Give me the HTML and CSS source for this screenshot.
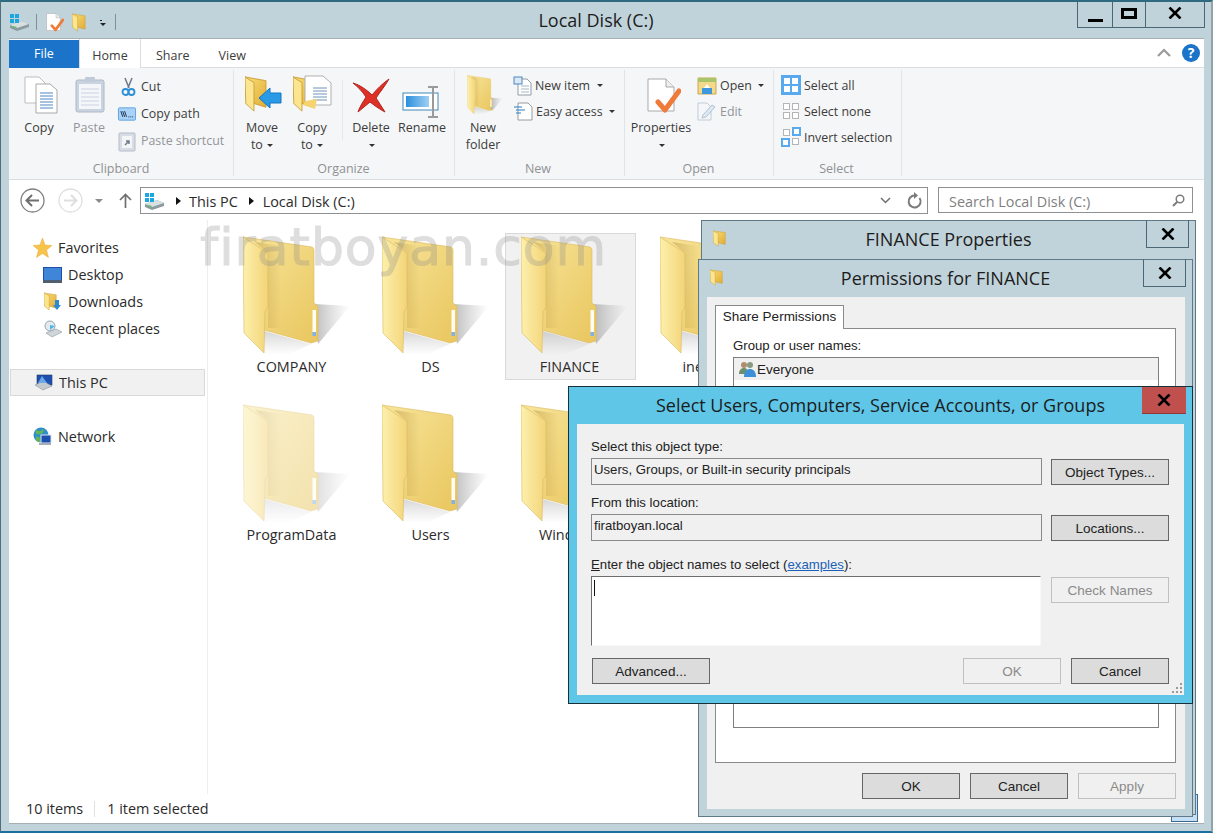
FILE: index.html
```html
<!DOCTYPE html>
<html lang="en">
<head>
<meta charset="utf-8">
<title>Local Disk (C:)</title>
<link rel="stylesheet" href="styles.css">
</head>
<body>
<svg class="defs" width="0" height="0" aria-hidden="true">
  <defs>
    <linearGradient id="gBack" x1="0" y1="0" x2="1" y2="1"><stop offset="0" stop-color="#f8e59b"/><stop offset="1" stop-color="#e9c65e"/></linearGradient>
    <linearGradient id="gFlap" x1="0" y1="0" x2="1" y2="0"><stop offset="0" stop-color="#fdf0ac"/><stop offset="1" stop-color="#f3d478"/></linearGradient>
    <linearGradient id="gFold" x1="0" y1="0" x2="1" y2="0"><stop offset="0" stop-color="#a9842c" stop-opacity=".4"/><stop offset="1" stop-color="#a9842c" stop-opacity="0"/></linearGradient>
    <linearGradient id="gSm" x1="0" y1="0" x2="1" y2="1"><stop offset="0" stop-color="#f9de7c"/><stop offset="1" stop-color="#e2ac32"/></linearGradient>
    <linearGradient id="gShadow" x1="0" y1="0" x2="1" y2="0"><stop offset="0" stop-color="#8f8f8f" stop-opacity=".6"/><stop offset="1" stop-color="#aaa" stop-opacity="0"/></linearGradient>
    <linearGradient id="gFloor" x1="0" y1="0" x2="0" y2="1"><stop offset="0" stop-color="#999" stop-opacity=".4"/><stop offset="1" stop-color="#aaa" stop-opacity="0"/></linearGradient>
    <linearGradient id="gBlue" x1="0" y1="0" x2="1" y2="0"><stop offset="0" stop-color="#2c8fdc"/><stop offset="1" stop-color="#9fd0f4"/></linearGradient>
    <symbol id="folder" viewBox="0 0 107 120">
      <path d="M71 68 107 70 75 108Z" fill="url(#gShadow)"/>
      <path d="M21 95 68 108 44 119H21Z" fill="url(#gFloor)"/>
      <path d="M0 1 69 11Q71 12 71 14V67L75 70V105L68 107 21 94Z" fill="url(#gBack)" stroke="#dcb85e" stroke-width=".6"/>
      <path d="M12 6 38 10V92H25V17Z" fill="url(#gFold)"/>
      <rect x="69.500" y="74" width="3.500" height="22" fill="#fffdf2"/>
      <rect x="69.500" y="96" width="3.500" height="4" fill="#7fb2e8"/>
      <path d="M0 1 25 17V71L22 76 21 117 1 97Z" fill="url(#gFlap)" stroke="#dcb85e" stroke-width=".6"/>
    </symbol>
    <symbol id="folder-s" viewBox="0 0 16 20" preserveAspectRatio="none">
      <path d="M0 1 14 3V17L6 15Z" fill="url(#gSm)" stroke="#c99a34" stroke-width=".5"/>
      <path d="M0 1 6 4V19L0.500 15Z" fill="#fbe58e" stroke="#c99a34" stroke-width=".5"/>
    </symbol>
    <symbol id="drive" viewBox="0 0 20 18">
      <path d="M1 12 13 8 20 11V14L8 18 1 15Z" fill="#8d9ba0"/>
      <path d="M1 12 13 8 20 11 8 15Z" fill="#d9e0e2"/>
      <path d="M4 13 8 14 7 15 3 14Z" fill="#57c05a"/>
      <rect x="1" y="1" width="4" height="4" fill="#1ba7e0"/><rect x="6" y="1" width="4" height="4" fill="#1ba7e0"/>
      <rect x="1" y="6" width="4" height="4" fill="#1ba7e0"/><rect x="6" y="6" width="4" height="4" fill="#1ba7e0"/>
    </symbol>
    <symbol id="x-mark" viewBox="0 0 14 12">
      <path d="M1.500 0.500 12.500 11.500M12.500 0.500 1.500 11.500" stroke="#000" stroke-width="2.600"/>
    </symbol>
    <symbol id="doc-check" viewBox="0 0 34 36">
      <path d="M1 1H19L27 9V33H1Z" fill="#fff" stroke="#a9a9a9"/>
      <path d="M19 1V9H27" fill="#eee" stroke="#a9a9a9"/>
      <path d="M11 24 18 32 32 13" fill="none" stroke="#ee7b3a" stroke-width="5" stroke-linecap="round" stroke-linejoin="round"/>
    </symbol>
    <symbol id="clip" viewBox="0 0 30 36">
      <rect x="1" y="3" width="28" height="32" rx="2" fill="#c3cfde" stroke="#a4aebd"/>
      <rect x="4" y="7" width="22" height="25" fill="#f4f6fa"/>
      <path d="M6 12H24M6 16H24M6 20H24M6 24H24M6 28H24" stroke="#c5cede"/>
      <rect x="10" y="0" width="10" height="5" rx="1" fill="#b9c3d2"/>
    </symbol>
  </defs>
</svg>

<div class="window">
  <header class="titlebar">
    <div class="qat">
      <svg class="i-drive" width="20" height="18"><use href="#drive"/></svg>
      <span class="qat-sep"></span>
      <svg class="i-qdoc" width="18" height="19"><use href="#doc-check"/></svg>
      <svg class="i-qfold" width="15" height="19"><use href="#folder-s"/></svg>
      <span class="qat-more"></span>
      <span class="qat-sep qat-sep-end"></span>
    </div>
    <div class="title">Local Disk (C:)</div>
    <div class="caption">
      <span class="cap cap-min"><i></i></span>
      <span class="cap cap-max"><i></i></span>
      <span class="cap cap-close"><svg width="14" height="12"><use href="#x-mark"/></svg></span>
    </div>
  </header>

  <div class="client">
    <nav class="tabs">
      <span class="tab-file">File</span>
      <span class="tab tab-on">Home</span>
      <span class="tab tab-share">Share</span>
      <span class="tab tab-view">View</span>
      <span class="tabs-end">
        <svg width="14" height="9" viewBox="0 0 14 9"><path d="M1 8 7 2 13 8" fill="none" stroke="#9b9b9b" stroke-width="2.200"/></svg>
        <span class="help">?</span>
      </span>
    </nav>

    <section class="ribbon">
      <div class="group g-clip">
        <div class="g-body">
          <div class="big w40">
            <span class="big-icon"><svg class="ic-copy" width="34" height="38" viewBox="0 0 34 38">
              <path d="M1 1H15L21 7V27H1Z" fill="#fff" stroke="#bdbdbd"/>
              <path d="M12 8H26L33 14V37H12Z" fill="#fff" stroke="#a9a9a9"/>
              <path d="M16 17H29M16 20H29M16 23H29M16 26H29M16 29H29M16 32H29" stroke="#4d86c4"/>
            </svg></span>
            <span>Copy</span>
          </div>
          <div class="big w40 ml10 off">
            <span class="big-icon"><svg class="ic-paste" width="30" height="36"><use href="#clip"/></svg></span>
            <span>Paste</span>
          </div>
          <div class="smalls sm27 ml9">
            <div class="sm"><svg width="18" height="20" viewBox="0 0 18 20"><path d="M7 1 11 11M14 1 10 11" stroke="#6d7a86" stroke-width="1.500"/><circle cx="7.500" cy="15" r="3" fill="none" stroke="#2b8fd8" stroke-width="1.800"/><circle cx="13.500" cy="15" r="3" fill="none" stroke="#2b8fd8" stroke-width="1.800"/></svg>Cut</div>
            <div class="sm"><svg width="18" height="20" viewBox="0 0 19 20"><rect x="0.500" y="3.500" width="18" height="13" rx="1" fill="#a9d2f6" stroke="#5fa3dc"/><path d="M3 7 5 13M5 7 7 13M7 7 9 13" stroke="#1c2b4a"/><path d="M11 13H12M13 13H14M15 13H16" stroke="#1c2b4a"/></svg>Copy path</div>
            <div class="sm off"><svg width="18" height="20" viewBox="0 0 18 20"><rect x="1" y="2" width="16" height="18" rx="1" fill="#d3d9e2" stroke="#aab4c1"/><rect x="4" y="5" width="10" height="12" fill="#f3f5f8"/><path d="M7 14 11 10M8 10H11V13" fill="none" stroke="#5b6675" stroke-width="1.500"/></svg>Paste shortcut</div>
          </div>
        </div>
        <div class="g-label">Clipboard</div>
      </div>

      <div class="group g-org">
        <div class="g-body">
          <div class="big w40">
            <span class="big-icon"><svg width="40" height="40" viewBox="0 0 40 40">
              <use href="#folder-s" x="3" width="24" height="38"/>
              <path d="M39 18V28H28V33L17 23 28 13V18Z" fill="#2b9ae6" stroke="#1477c4"/>
            </svg></span>
            <span>Move</span><span>to <i class="caret"></i></span>
          </div>
          <div class="big w40 ml10">
            <span class="big-icon"><svg width="42" height="38" viewBox="0 0 42 38">
              <use href="#folder-s" x="2" width="24" height="38"/>
              <path d="M14 1H32L40 8V30H14Z" fill="#fff" stroke="#b0b0b0"/>
              <path d="M22 13H36M22 16H36M22 19H36M22 22H36M22 25H36" stroke="#6f93bb"/>
              <path d="M14 26 26 24 24 34 12 30Z" fill="#f5d36f"/>
            </svg></span>
            <span>Copy</span><span>to <i class="caret"></i></span>
          </div>
          <span class="g-sep"></span>
          <div class="big w40">
            <span class="big-icon"><svg class="ic-del" width="38" height="35" viewBox="0 0 38 35"><path d="M1 5C8 7 15 12 20 17 25 11 30 6 37 1 33 8 28 14 24 20 27 25 30 29 33 34 27 31 22 27 18 24 14 27 10 31 6 34 8 28 11 24 14 19 10 13 6 9 1 5Z" fill="#dd3127" stroke="#b3241b"/></svg></span>
            <span>Delete</span><span><i class="caret"></i></span>
          </div>
          <div class="big w48 ml7">
            <span class="big-icon"><svg class="ic-ren" width="38" height="32" viewBox="0 0 38 32"><rect x="1" y="7" width="35" height="17" fill="#fff" stroke="#3f88b6"/><rect x="4" y="10" width="23" height="11" fill="url(#gBlue)"/><path d="M26 1H36M26 31H36M31 1V31" stroke="#9a9a9a" stroke-width="2"/></svg></span>
            <span>Rename</span>
          </div>
        </div>
        <div class="g-label">Organize</div>
      </div>

      <div class="group g-new">
        <div class="g-body">
          <div class="big w40">
            <span class="big-icon"><svg class="ic-new" width="36" height="40"><use href="#folder" width="36" height="40"/></svg></span>
            <span>New</span><span>folder</span>
          </div>
          <div class="smalls sm26 ml10">
            <div class="sm gap4"><svg width="18" height="19" viewBox="0 0 18 19"><path d="M5 3H14L18 7V19H5Z" fill="#fff" stroke="#8f9aa5"/><rect x="1" y="1" width="8" height="7" fill="#dbe8f5" stroke="#4e87bd"/><path d="M8 10H16M8 13H16M8 16H16" stroke="#a9b6c3"/></svg>New item <i class="caret"></i></div>
            <div class="sm gap3"><svg width="20" height="19" viewBox="0 0 20 19"><path d="M5 1H15L19 5V18H5Z" fill="#fff" stroke="#9a9a9a"/><path d="M1 5H9M3 8H12M3 11H8" stroke="#2b7fc4"/></svg>Easy access <i class="caret"></i></div>
          </div>
        </div>
        <div class="g-label">New</div>
      </div>

      <div class="group g-open">
        <div class="g-body">
          <div class="big w70">
            <span class="big-icon"><svg class="ic-prop" width="34" height="36"><use href="#doc-check"/></svg></span>
            <span>Properties</span><span><i class="caret"></i></span>
          </div>
          <div class="smalls sm26 ml1">
            <div class="sm gap3"><svg width="20" height="20" viewBox="0 0 20 20"><path d="M1 3H19V19H1Z" fill="#f3d98a" stroke="#c9a84e"/><path d="M1 3H19V7H1Z" fill="#a8c56a"/><path d="M5 19V13H15V19Z" fill="#3f97dd"/><path d="M7 13 10 9 13 13" fill="#fff"/></svg>Open <i class="caret"></i></div>
            <div class="sm off gap4"><svg width="19" height="19" viewBox="0 0 19 19"><path d="M1 1H10L14 5V18H1Z" fill="#f4f7fa" stroke="#b7c6d4"/><path d="M6 13 15 3 18 5 9 15 5 16Z" fill="#dbe6f0" stroke="#a5b9cc"/></svg>Edit</div>
          </div>
        </div>
        <div class="g-label">Open</div>
      </div>

      <div class="group g-sel">
        <div class="g-body">
          <div class="smalls sm26">
            <div class="sm gap3"><svg width="20" height="20" viewBox="0 0 20 20"><rect width="20" height="20" fill="#58a9ee"/><rect x="3" y="3" width="6" height="6" fill="#fff"/><rect x="11" y="3" width="6" height="6" fill="#fff"/><rect x="3" y="11" width="6" height="6" fill="#fff"/><rect x="11" y="11" width="6" height="6" fill="#fff"/></svg>Select all</div>
            <div class="sm gap3"><svg width="20" height="20" viewBox="0 0 20 20" fill="#fff" stroke="#b5b5b5"><rect x="2.500" y="2.500" width="6" height="6"/><rect x="11.500" y="2.500" width="6" height="6"/><rect x="2.500" y="11.500" width="6" height="6"/><rect x="11.500" y="11.500" width="6" height="6"/></svg>Select none</div>
            <div class="sm gap3"><svg width="20" height="20" viewBox="0 0 20 20"><rect x="2.500" y="2.500" width="6" height="6" fill="#fff" stroke="#b5b5b5"/><rect x="11" y="0" width="9" height="9" fill="#58a9ee"/><rect x="13" y="2" width="5" height="5" fill="#fff"/><rect x="0" y="11" width="9" height="9" fill="#58a9ee"/><rect x="2" y="13" width="5" height="5" fill="#fff"/><rect x="11.500" y="11.500" width="6" height="6" fill="#fff" stroke="#b5b5b5"/></svg>Invert selection</div>
          </div>
        </div>
        <div class="g-label">Select</div>
      </div>
    </section>

    <div class="addressrow">
      <div class="navbtns">
        <svg class="nb-back" width="25" height="25" viewBox="0 0 25 25"><circle cx="12.500" cy="12.500" r="11.500" fill="#fff" stroke="#7f7f7f" stroke-width="1.300"/><path d="M19 12.500H7M12 7 6.500 12.500 12 18" fill="none" stroke="#6f6f6f" stroke-width="2"/></svg>
        <svg class="nb-fwd" width="25" height="25" viewBox="0 0 25 25"><circle cx="12.500" cy="12.500" r="11.500" fill="#fff" stroke="#dfdfdf" stroke-width="1.300"/><path d="M6 12.500H18M13 7 18.500 12.500 13 18" fill="none" stroke="#dfdfdf" stroke-width="2"/></svg>
        <i class="caret caret-grey nb-more"></i>
        <svg class="nb-up" width="13" height="15" viewBox="0 0 13 15"><path d="M6.500 15V2M1 7 6.500 1.500 12 7" fill="none" stroke="#6f6f6f" stroke-width="1.700"/></svg>
      </div>
      <div class="addr">
        <svg width="20" height="18"><use href="#drive"/></svg>
        <i class="crumb"></i><span class="addr-t">This PC</span>
        <i class="crumb crumb-2"></i><span class="addr-t">Local Disk (C:)</span>
        <span class="addr-end">
          <svg width="11" height="7" viewBox="0 0 11 7"><path d="M1 1 5.500 5.500 10 1" fill="none" stroke="#6f6f6f" stroke-width="1.500"/></svg>
          <svg width="15" height="17" viewBox="0 0 15 17"><path d="M12.500 6A6 6 0 1 1 8 3.500" fill="none" stroke="#7b7b7b" stroke-width="2"/><path d="M7 0 11 3.500 7 7Z" fill="#7b7b7b"/></svg>
        </span>
      </div>
      <div class="search">
        <span class="addr-t">Search Local Disk (C:)</span>
        <svg width="13" height="13" viewBox="0 0 13 13"><circle cx="8" cy="5" r="3.800" fill="none" stroke="#7d7d7d" stroke-width="1.500"/><path d="M5.300 7.700 1 12" stroke="#7d7d7d" stroke-width="2"/></svg>
      </div>
    </div>

    <div class="main">
      <aside class="navpane">
        <div class="nav-item"><svg class="nav-i" width="19" height="20" viewBox="0 0 19 20"><path d="M9.500 0 12 7 19 7.500 13.500 12 15.500 19.500 9.500 15.500 3.500 19.500 5.500 12 0 7.500 7 7Z" fill="#f7c44a" stroke="#e6a73a" stroke-width=".5"/></svg>Favorites</div>
        <div class="nav-item nav-sub"><svg class="nav-i" width="19" height="16" viewBox="0 0 19 16"><rect width="19" height="15" fill="#1f4ea8"/><rect x="1" y="1" width="17" height="12" fill="#3f86d8"/><rect y="13" width="19" height="3" fill="#4f5f70"/></svg>Desktop</div>
        <div class="nav-item nav-sub"><svg class="nav-i" width="17" height="19" viewBox="0 0 17 19"><use href="#folder-s" width="14" height="19"/><path d="M11 8H15V13H17L13 18 9 13H11Z" fill="#2b8ad4"/></svg>Downloads</div>
        <div class="nav-item nav-sub"><svg class="nav-i" width="19" height="18" viewBox="0 0 19 18"><circle cx="7" cy="6" r="5" fill="#e4ebef" stroke="#99a5ac"/><path d="M3 13 13 9 19 12 9 17Z" fill="#cfd6da" stroke="#8d979c" stroke-width=".6"/><path d="M7 5 12 6 7 10Z" fill="#4cb4e8"/></svg>Recent places</div>
        <div class="nav-item nav-on"><svg class="nav-i" width="19" height="17" viewBox="0 0 19 17"><rect x="3" y="1" width="15" height="10" fill="#1d4fae" stroke="#263a66" stroke-width=".6"/><path d="M1 11 9 7 18 12 9 16Z" fill="#c3cbd1" stroke="#7e878d" stroke-width=".5"/><path d="M8 2 13 9H4Z" fill="#6ea7e6"/></svg>This PC</div>
        <div class="nav-item nav-net"><svg class="nav-i" width="19" height="19" viewBox="0 0 19 19"><circle cx="8" cy="8" r="7.500" fill="#2f8fc9"/><path d="M3 3C6 5 8 4 10 2 12 5 8 8 5 7 3 8 2 6 3 3ZM3 10C6 9 8 11 7 15 4 15 2 13 3 10Z" fill="#63b556"/><rect x="8" y="8" width="10" height="8" fill="#1d4fae" stroke="#dfe5ea"/><rect x="6" y="16" width="12" height="2" fill="#a6aeb5"/></svg>Network</div>
      </aside>
      <div class="files">
        <div class="file"><svg width="107" height="120"><use href="#folder"/></svg><span>COMPANY</span></div>
        <div class="file"><svg width="107" height="120"><use href="#folder"/></svg><span>DS</span></div>
        <div class="file file-on"><svg width="107" height="120"><use href="#folder"/></svg><span>FINANCE</span></div>
        <div class="file"><svg width="107" height="120"><use href="#folder"/></svg><span>inetpub</span></div>
        <div class="file file-hidden"><svg width="107" height="120"><use href="#folder"/></svg><span>ProgramData</span></div>
        <div class="file"><svg width="107" height="120"><use href="#folder"/></svg><span>Users</span></div>
        <div class="file"><svg width="107" height="120"><use href="#folder"/></svg><span>Windows</span></div>
      </div>
    </div>

    <footer class="status">
      <span>10 items</span>
      <i class="status-sep"></i>
      <span>1 item selected</span>
    </footer>
  </div>

  <div class="watermark">firatboyan.com</div>
  <div class="viewbtn"></div>

  <section class="dlg dlg-props">
    <div class="dlg-head">
      <svg class="dlg-ico" width="14" height="17"><use href="#folder-s"/></svg>
      <div class="dlg-title">FINANCE Properties</div>
      <span class="dlg-x"><svg width="14" height="12"><use href="#x-mark"/></svg></span>
    </div>
    <div class="props-line"></div>
  </section>

  <section class="dlg dlg-perm">
    <div class="dlg-head perm-head">
      <svg class="dlg-ico" width="14" height="17"><use href="#folder-s"/></svg>
      <div class="dlg-title">Permissions for FINANCE</div>
      <span class="dlg-x"><svg width="14" height="12"><use href="#x-mark"/></svg></span>
    </div>
    <div class="perm-body">
      <div class="perm-tab">Share Permissions</div>
      <div class="perm-panel">
        <div class="perm-label">Group or user names:</div>
        <div class="perm-list">
          <div class="perm-row">
            <svg width="17" height="16" viewBox="0 0 17 16"><circle cx="5" cy="4" r="3" fill="#b08c70"/><circle cx="11" cy="4" r="3" fill="#8a9a80"/><path d="M0 13C0 8 3 7 5 7S9 8 9 13Z" fill="#6f8f6a"/><path d="M5 16C5 10 8 8 11 8S17 10 17 16Z" fill="#3d8fd8"/></svg>
            Everyone
          </div>
        </div>
      </div>
      <div class="perm-btns">
        <span class="btn">OK</span>
        <span class="btn">Cancel</span>
        <span class="btn btn-off">Apply</span>
      </div>
    </div>
  </section>

  <section class="dlg dlg-select">
    <div class="dlg-head sel-head">
      <div class="dlg-title">Select Users, Computers, Service Accounts, or Groups</div>
      <span class="dlg-x sel-x"><svg width="14" height="12"><use href="#x-mark"/></svg></span>
    </div>
    <div class="sel-body">
      <div class="sel-label">Select this object type:</div>
      <div class="sel-row">
        <div class="sel-field">Users, Groups, or Built-in security principals</div>
        <span class="btn btn-sel">Object Types...</span>
      </div>
      <div class="sel-label sel-label-2">From this location:</div>
      <div class="sel-row">
        <div class="sel-field">firatboyan.local</div>
        <span class="btn btn-sel">Locations...</span>
      </div>
      <div class="sel-label sel-label-3"><u>E</u>nter the object names to select (<a class="sel-link">examples</a>):</div>
      <div class="sel-row sel-row-top">
        <div class="sel-input"><i class="cursor"></i></div>
        <span class="btn btn-sel btn-off">Check Names</span>
      </div>
      <div class="sel-foot">
        <span class="btn btn-sel">Advanced...</span>
        <span class="sel-foot-end">
          <span class="btn btn-sel btn-off">OK</span>
          <span class="btn btn-sel">Cancel</span>
        </span>
      </div>
      <svg class="grip" width="12" height="12" viewBox="0 0 12 12" fill="#9a9a9a"><rect x="9" y="1" width="2" height="2"/><rect x="5" y="5" width="2" height="2"/><rect x="9" y="5" width="2" height="2"/><rect x="1" y="9" width="2" height="2"/><rect x="5" y="9" width="2" height="2"/><rect x="9" y="9" width="2" height="2"/></svg>
    </div>
  </section>
</div>
</body>
</html>
```

FILE: styles.css
```css
* { box-sizing: border-box; }
html, body { margin: 0; padding: 0; }
body { width: 1213px; height: 833px; overflow: hidden; background: #fff; font-family: "Open Sans", "Noto Sans", sans-serif; font-size: 13px; color: #2b2b2b; }
.defs { position: absolute; }
svg { display: block; flex: none; overflow: visible; }
i { font-style: normal; }

.window { position: relative; width: 1213px; height: 833px; display: flex; flex-direction: column; background: #c1d3da; border-top: 2px solid #2f6a80; border-bottom: 2px solid #1b6f9c; border-left: 1px solid #4f6f7f; border-right: 2px solid #93a3aa; }

.titlebar { height: 36px; display: flex; margin-right: -2px; flex: none; }
.qat { width: 114px; padding: 11px 0 0 8px; display: flex; align-items: flex-start; flex: none; }
.qat-sep { width: 1px; height: 16px; background: #7f9099; margin: 1px 0 0 7px; }
.qat-sep-end { margin-left: 13px; }
.i-qdoc { margin: 0 0 0 10px; }
.i-qfold { margin-left: 8px; }
.qat-more { width: 7px; height: 6px; margin: 7px 0 0 13px; border-top: 1px solid #222; position: relative; }
.qat-more::after { content: ""; position: absolute; left: 0; top: 2px; border: 3.500px solid transparent; border-top-color: #222; border-bottom: 0; }
.title { flex: 1; text-align: center; font-size: 18px; line-height: 37px; color: #1c1c1c; }
.caption { width: 136px; padding-right: 7px; flex: none; display: flex; height: 26px; }
.cap { height: 26px; border: 1px solid #4a6775; border-top: 0; border-left: 0; display: flex; align-items: center; justify-content: center; }
.cap-min { width: 36px; border-left: 1px solid #4a6775; align-items: flex-end; padding-bottom: 5px; }
.cap-min i { width: 15px; height: 3px; background: #000; display: block; }
.cap-max { width: 33px; }
.cap-max i { width: 16px; height: 11px; border: 3px solid #000; display: block; margin-top: -2px; }
.cap-close { width: 59px; }
.cap-close svg { margin-top: -3px; }

.client { margin: 0 7px 0 8px; width: 1195px; height: 786px; flex: none; background: #fff; border-top: 1px solid #a7b0b4; border-bottom: 1px solid #a7b0b4; display: flex; flex-direction: column; }

.tabs { height: 29px; flex: none; display: flex; align-items: flex-end; border-bottom: 1px solid #dcdddf; position: relative; }
.tab-file { width: 70px; height: 28px; background: #1b74c9; color: #fff; text-align: center; line-height: 27px; margin-bottom: -1px; font-size: 12.500px; }
.tab { height: 28px; line-height: 33px; color: #3c3c3c; font-size: 12.500px; }
.tab-on { width: 62px; text-align: center; background: #fff; border: 1px solid #dcdddf; border-bottom: 0; border-top: 0; margin-bottom: -1px; height: 29px; line-height: 34px; }
.tab-share { margin-left: 15px; }
.tab-view { margin-left: 29px; }
.tabs-end { margin-left: auto; display: flex; align-items: center; gap: 11px; align-self: center; padding-right: 4px; margin-top: -1px; }
.help { width: 18px; height: 18px; border-radius: 50%; background: #1b74c9; color: #fff; font: bold 14px/18px "Open Sans", sans-serif; text-align: center; }

.ribbon { height: 111px; flex: none; display: flex; background: #f5f6f7; }
.group { display: flex; flex-direction: column; position: relative; }
.group::after { content: ""; position: absolute; right: 0; top: 2px; bottom: 3px; width: 1px; background: #e1e3e4; }
.g-clip { width: 225px; padding-left: 10px; }
.g-org { width: 221px; padding-left: 8px; }
.g-new { width: 170px; padding-left: 8px; }
.g-open { width: 149px; padding-left: 1px; }
.g-sel { width: 128px; padding-left: 7px; }
.g-body { flex: 1; display: flex; min-height: 0; }
.g-label { height: 20px; line-height: 20px; text-align: center; color: #8f9295; font-size: 12.500px; margin-left: -11px; }
.g-org .g-label { margin-left: -10px; }
.g-new .g-label { margin-left: -12px; }
.g-open .g-label { margin-left: -3px; }
.g-sel .g-label { margin-left: -10px; }
.g-sep { width: 1px; height: 60px; margin: 12px 8px 0 10px; background: #e6e7e8; flex: none; }

.big { display: flex; flex-direction: column; align-items: center; line-height: 17px; color: #3c3c3c; flex: none; font-size: 12.500px; white-space: nowrap; }
.big-icon { height: 51px; display: flex; align-items: flex-start; padding-top: 7px; }
.ic-copy { margin: 1px 0 0 3px; }
.ic-paste { margin: 2px 0 0 2px; }
.ic-del { margin-top: 3px; }
.ic-ren { margin: 11px 2px 0 0; }
.ic-new { margin-left: 4px; }
.ic-prop { margin: 3px 0 0 6px; }
.w40 { width: 40px; }
.w48 { width: 48px; }
.w70 { width: 70px; }
.ml1 { margin-left: 1px; }
.ml7 { margin-left: 7px; }
.ml9 { margin-left: 9px; }
.ml10 { margin-left: 10px; }

.smalls { flex: none; }
.sm27 { padding-top: 5px; }
.sm26 { padding-top: 4px; }
.sm { display: flex; align-items: center; gap: 5px; color: #3c3c3c; font-size: 12.400px; white-space: nowrap; }
.sm27 .sm { height: 27px; }
.sm26 .sm { height: 26px; }
.gap3 { gap: 3px; }
.gap4 { gap: 4px; }
.off, .off span, .sm.off { color: #92959a; }
.off svg { opacity: .85; }
.caret { display: inline-block; width: 0; height: 0; border: 3px solid transparent; border-top: 3px solid #333; border-bottom: 0; vertical-align: 2px; margin-left: 3px; }
.big span .caret { margin-left: 1px; }
.caret-grey { border-top-color: #8c8c8c; border-width: 4px 4px 0; }

.addressrow { height: 41px; flex: none; border-top: 1px solid #dcdddf; display: flex; align-items: flex-start; padding-top: 7px; font-size: 14.400px; }
.navbtns { width: 131px; height: 27px; display: flex; align-items: center; padding-left: 11px; flex: none; }
.nb-fwd { margin-left: 13px; }
.nb-more { margin: 0 0 0 12px; }
.nb-up { margin-left: 16px; }
.addr { width: 788px; height: 27px; border: 1px solid #8e9193; display: flex; align-items: center; padding-left: 3px; color: #2b2b2b; flex: none; }
.addr-t { margin-top: 2px; }
.crumb { width: 0; height: 0; border: 4px solid transparent; border-left: 5px solid #111; border-right: 0; margin: 0 8px 0 12px; }
.crumb-2 { margin-left: 11px; margin-right: 9px; }
.addr-end { margin-left: auto; display: flex; align-items: center; gap: 16px; padding-right: 5px; }
.search { width: 255px; height: 26px; margin-left: 10px; border: 1px solid #8e9193; display: flex; align-items: center; justify-content: space-between; padding: 0 7px 0 10px; color: #7f7f7f; flex: none; }

.main { flex: 1; display: flex; min-height: 0; }
.navpane { width: 199px; flex: none; border-right: 1px solid #eeeeee; padding-top: 14px; font-size: 14.400px; }
.nav-item { height: 27px; display: flex; align-items: center; padding-left: 24px; gap: 6px; color: #2b2b2b; }
.nav-i { width: 19px; }
.nav-sub { padding-left: 34px; gap: 6px; }
.nav-on { margin: 27px 2px 0 1px; height: 27px; padding-left: 23px; background: #f1f1f1; border: 1px solid #d9d9d9; }
.nav-net { margin-top: 27px; }

.files { padding: 13px 0 0 19px; display: grid; grid-template-columns: repeat(4, 131px); grid-auto-rows: 147px; column-gap: 8px; row-gap: 21px; align-content: start; font-size: 14.400px; }
.file { border: 1px solid transparent; padding: 2px 0 0 15px; color: #2b2b2b; }
.file span { display: block; width: 131px; margin: 1px 0 0 -17px; text-align: center; line-height: 20px; white-space: nowrap; }
.file-on { background: #f1f1f1; border-color: #d9d9d9; }
.file-hidden svg { opacity: .5; }

.status { height: 29px; flex: none; display: flex; align-items: center; padding: 0 0 0 17px; font-size: 14.400px; color: #2b2b2b; }
.status-sep { width: 1px; height: 16px; background: #e1e1e1; margin: 0 12px 0 11px; }

.watermark { position: absolute; left: 199px; top: 215px; font: 400 52px/60px "DejaVu Sans", sans-serif; letter-spacing: .9px; -webkit-text-stroke: 1px #8a8a8a; color: #8a8a8a; opacity: .28; white-space: nowrap; }
.viewbtn { position: absolute; left: 1170px; top: 792px; width: 27px; height: 28px; background: #c5dff5; border: 1px solid #3a6a90; }

.dlg { position: absolute; font-family: "Liberation Sans", sans-serif; }
.dlg-head { display: flex; align-items: flex-start; position: relative; height: 38px; flex: none; }
.perm-head { height: 37px; }
.dlg-ico { position: absolute; left: 11px; top: 9px; }
.dlg-title { flex: 1; text-align: center; font-family: "Open Sans", sans-serif; font-size: 18px; line-height: 36px; color: #1c1c1c; }
.dlg-x { position: absolute; top: -1px; right: 6px; width: 43px; height: 28px; border: 1px solid #4a6775; border-top: 0; display: flex; align-items: center; justify-content: center; }

.dlg-props { left: 700px; top: 218px; width: 495px; height: 595px; background: #c1d3da; border: 1px solid #5f7a86; }
.props-line { height: 2px; margin: 0 57px 0 8px; background: #5a6870; }
.dlg-perm { left: 697px; top: 257px; width: 495px; height: 558px; background: #c1d3da; border: 1px solid #5f7a86; display: flex; flex-direction: column; }
.perm-body { margin: 0 7px 7px 8px; flex: 1; background: #f0f0f0; padding: 8px 9px 0 8px; position: relative; }
.perm-tab { position: relative; z-index: 1; width: 129px; height: 24px; background: #fff; border: 1px solid #8a8a8a; border-bottom: 0; font-size: 13.500px; line-height: 22px; text-align: center; color: #222; margin-bottom: -1px; }
.perm-panel { width: 461px; height: 435px; background: #fff; border: 1px solid #8a8a8a; padding: 9px 17px; }
.perm-label { font-size: 13.200px; line-height: 16px; color: #222; }
.perm-list { margin-top: 3px; width: 426px; height: 371px; border: 1px solid #7f7f7f; }
.perm-row { height: 22px; background: #f0f0f0; display: flex; align-items: center; gap: 1px; padding-left: 5px; font-size: 13.500px; color: #222; }
.perm-btns { display: flex; justify-content: flex-end; gap: 10px; margin-top: 10px; }
.btn { width: 98px; height: 26px; border: 1px solid #666; background: #dcdcdc; display: flex; align-items: center; justify-content: center; font-size: 13.500px; color: #222; }
.btn-off { background: #f0f0f0; border-color: #c0c0c0; color: #8a8a8a; }

.dlg-select { left: 567px; top: 384px; width: 625px; height: 318px; background: #5fc6e8; border: 1px solid #17303c; display: flex; flex-direction: column; }
.sel-head { height: 37px; }
.sel-x { background: #c0504d; border: 0; border-bottom: 1px solid #8f3a38; top: 0; right: 6px; width: 44px; height: 27px; }
.sel-body { margin: 0 8px 8px 8px; flex: 1; background: #f0f0f0; padding: 15px 0 0 14px; position: relative; color: #222; font-size: 13.200px; }
.sel-label { line-height: 16px; height: 16px; }
.sel-label-2 { margin-top: 10px; }
.sel-label-3 { margin-top: 16px; }
.sel-link { color: #1a62b8; text-decoration: underline; }
.sel-row { display: flex; align-items: flex-end; gap: 9px; margin-top: 3px; }
.sel-row-top { align-items: flex-start; gap: 10px; }
.sel-field { width: 451px; height: 27px; border: 1px solid #8a8a8a; padding: 2px 2px; line-height: 18px; flex: none; }
.btn-sel { width: 118px; height: 26px; }
.sel-input { width: 450px; height: 70px; flex: none; background: #fff; border-top: 1px solid #6d6d6d; border-left: 1px solid #6d6d6d; border-right: 1px solid #f8f8f8; border-bottom: 1px solid #f8f8f8; padding: 3px 0 0 2px; }
.sel-row-top .btn-sel { margin-top: 1px; }
.cursor { display: block; width: 1px; height: 16px; background: #111; }
.sel-foot { display: flex; justify-content: space-between; width: 577px; margin: 12px 0 0 1px; }
.sel-foot-end { display: flex; gap: 10px; }
.sel-foot-end .btn-sel { width: 98px; }
.grip { position: absolute; right: 1px; bottom: 1px; }
```
